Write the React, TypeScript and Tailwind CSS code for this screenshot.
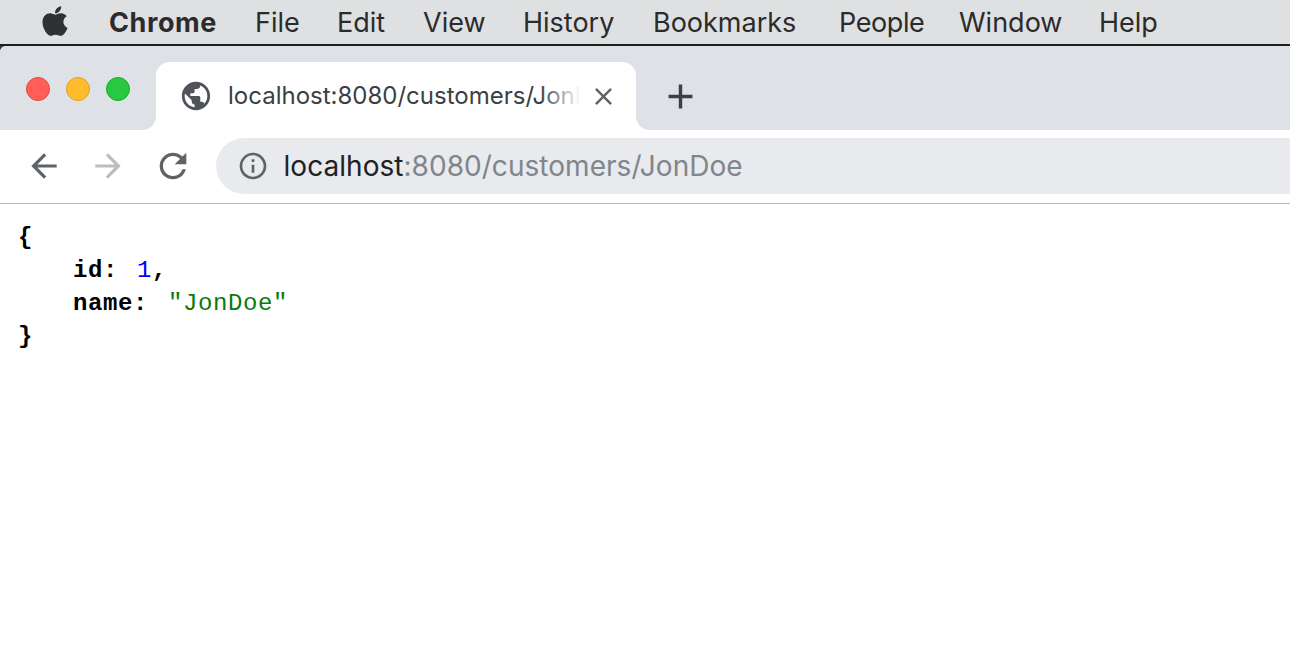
import { FaApple } from "react-icons/fa";
import { MdPublic, MdClose, MdAdd, MdRefresh, MdInfoOutline, MdArrowBack, MdArrowForward } from "react-icons/md";

const menus = [
  { label: "File", w: "w-[82px]" },
  { label: "Edit", w: "w-[86px]" },
  { label: "View", w: "w-[100px]" },
  { label: "History", w: "w-[130px]" },
  { label: "Bookmarks", w: "w-[186px]" },
  { label: "People", w: "w-[120px]", extra: "tracking-[-0.4px]" },
  { label: "Window", w: "w-[140px]" },
  { label: "Help", w: "w-[80px]" },
];

function Dot({ bg, border }: { bg: string; border: string }) {
  return <div className={`w-[24px] h-[24px] rounded-full border ${bg} ${border}`} />;
}

export default function App() {
  return (
    <div className="w-[1290px] h-[658px] overflow-hidden bg-white font-['Inter','Liberation_Sans',sans-serif]">
      <header className="h-[44px] bg-[#dfe0e2] flex items-center text-[27px] leading-none tracking-[0px] text-[#2b2b2b]">
        <FaApple className="ml-[40px] w-[30px] h-[34px] text-[#2f3133] -mt-[3px]" />
        <span className="ml-[39px] w-[146px] font-bold tracking-[0.6px]">Chrome</span>
        {menus.map((m) => (
          <span key={m.label} className={`${m.w} ${m.extra ?? ""}`}>{m.label}</span>
        ))}
      </header>
      <div className="h-[2px] bg-[#1e1e1e]" />
      <div className="bg-[#3a3a3a]">
        <div className="flex h-[84px] bg-white rounded-tl-[6px] overflow-hidden">
          <div className="w-[156px] bg-[#dee1e6] rounded-br-[14px] flex gap-[16px] pl-[26px] pt-[31px]">
            <Dot bg="bg-[#ff5f57]" border="border-[#e2463f]" />
            <Dot bg="bg-[#ffbd2e]" border="border-[#e1a116]" />
            <Dot bg="bg-[#28c940]" border="border-[#12ac28]" />
          </div>
          <div className="w-[480px] bg-[#dee1e6]">
            <div className="mt-[16px] h-[68px] bg-white rounded-t-[14px] flex items-center pl-[23px]">
              <MdPublic className="w-[34px] h-[34px] text-[#50545a] shrink-0" />
              <div className="relative ml-[15px] w-[352px] overflow-hidden whitespace-nowrap text-[24px] tracking-[0px] text-[#3c4043]">
                localhost:8080/customers/JonDoe
                <div className="absolute right-0 top-0 bottom-0 w-[40px] bg-gradient-to-r from-white/0 to-white" />
              </div>
              <MdClose className="ml-[9px] w-[29px] h-[29px] text-[#5f6368] shrink-0" />
            </div>
          </div>
          <div className="flex-1 bg-[#dee1e6] rounded-bl-[14px] flex items-start pl-[23.5px] pt-[29.5px]">
            <MdAdd className="w-[41px] h-[41px] text-[#3c4043]" />
          </div>
        </div>
      </div>
      <div className="h-[74px] pb-[1px] bg-white border-b border-[#b9b9b9] flex items-center">
        <MdArrowBack className="ml-[25px] w-[38px] h-[38px] text-[#5f6368]" />
        <MdArrowForward className="ml-[26px] w-[38px] h-[38px] text-[#bdbdbd]" />
        <MdRefresh className="ml-[25.5px] w-[40px] h-[40px] text-[#5f6368]" />
        <div className="ml-[23.5px] flex-1 h-[56px] rounded-l-[28px] bg-[#e8eaed] flex items-center pl-[20.5px] text-[28px] tracking-[0.04px] text-[#80868b]">
          <MdInfoOutline className="w-[32px] h-[32px] text-[#5f6368] shrink-0" />
          <span className="ml-[15px]"><span className="text-[#202124]">localhost</span>:8080/customers/JonDoe</span>
        </div>
      </div>
      <pre className="pl-[18px] pt-[16.5px] font-['Liberation_Mono',monospace] text-[24px] leading-[33.3px] tracking-[0.6px] text-black">
        <div className="font-bold">{"{"}</div>
        <div className="pl-[55px]"><span className="font-bold">id:</span> <span className="ml-[4px] text-[#0000ff]">1</span><span className="font-bold">,</span></div>
        <div className="pl-[55px]"><span className="font-bold">name:</span> <span className="ml-[5px] text-[#0a7a0a]">"JonDoe"</span></div>
        <div className="font-bold">{"}"}</div>
      </pre>
    </div>
  );
}
